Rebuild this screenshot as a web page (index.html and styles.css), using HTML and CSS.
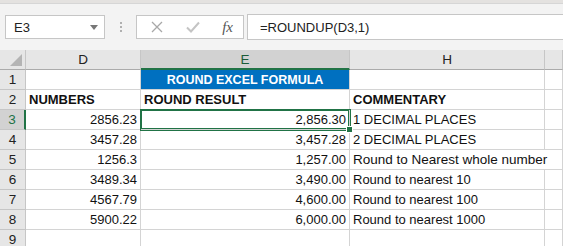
FILE: index.html
```html
<!DOCTYPE html>
<html>
<head>
    <title>ROUNDUP</title>
    <link rel="stylesheet" href="styles.css">
</head>
<body>
    <div class="ribbon"></div>
    <div class="formula-bar">
        <div class="name-box">
            <span>E3</span>
            <svg class="caret" width="8" height="5" viewBox="0 0 8 5"><path d="M0 0h8L4 5z" fill="#777"/></svg>
        </div>
        <div class="grip"><i></i><i></i><i></i></div>
        <div class="buttons">
            <svg width="12" height="12" viewBox="0 0 12 12"><path d="M1 1L11 11M11 1L1 11" stroke="#a8a8a8" stroke-width="1.3"/></svg>
            <svg width="14" height="12" viewBox="0 0 14 12"><path d="M1 6.5L5 10.5L13 1.5" stroke="#c4c4c4" stroke-width="2" fill="none"/></svg>
            <span class="fx">fx</span>
        </div>
        <div class="formula">=ROUNDUP(D3,1)</div>
    </div>

    <div class="sheet">
        <div class="corner"><svg width="12" height="12" viewBox="0 0 12 12"><path d="M12 0V12H0z" fill="#b4b4b4"/></svg></div>
        <div class="col-head">D</div>
        <div class="col-head active">E</div>
        <div class="col-head">H</div>
        <div class="col-head"></div>

        <div class="row-head">1</div>
        <div class="cell"></div>
        <div class="cell title">ROUND EXCEL FORMULA</div>
        <div class="cell"></div>
        <div class="cell"></div>

        <div class="row-head">2</div>
        <div class="cell bold">NUMBERS</div>
        <div class="cell bold">ROUND RESULT</div>
        <div class="cell bold">COMMENTARY</div>
        <div class="cell"></div>

        <div class="row-head active">3</div>
        <div class="cell num">2856.23</div>
        <div class="cell num selected">2,856.30</div>
        <div class="cell">1 DECIMAL PLACES</div>
        <div class="cell"></div>

        <div class="row-head">4</div>
        <div class="cell num">3457.28</div>
        <div class="cell num">3,457.28</div>
        <div class="cell">2 DECIMAL PLACES</div>
        <div class="cell"></div>

        <div class="row-head">5</div>
        <div class="cell num">1256.3</div>
        <div class="cell num">1,257.00</div>
        <div class="cell overflow">Round to Nearest whole number</div>
        <div class="cell"></div>

        <div class="row-head">6</div>
        <div class="cell num">3489.34</div>
        <div class="cell num">3,490.00</div>
        <div class="cell">Round to nearest 10</div>
        <div class="cell"></div>

        <div class="row-head">7</div>
        <div class="cell num">4567.79</div>
        <div class="cell num">4,600.00</div>
        <div class="cell">Round to nearest 100</div>
        <div class="cell"></div>

        <div class="row-head">8</div>
        <div class="cell num">5900.22</div>
        <div class="cell num">6,000.00</div>
        <div class="cell">Round to nearest 1000</div>
        <div class="cell"></div>

        <div class="row-head">9</div>
        <div class="cell"></div>
        <div class="cell"></div>
        <div class="cell"></div>
        <div class="cell"></div>
    </div>
</body>
</html>
```

FILE: styles.css
```css
body {
    margin: 0;
    font-family: "Liberation Sans", Arial, sans-serif;
    background-color: #f3f3f3;
    overflow: hidden;
}

.ribbon {
    height: 3px;
    background-color: #e4e2e0;
    border-bottom: 1px solid #d6d6d6;
}

.formula-bar {
    display: flex;
    align-items: center;
    height: 26px;
    margin-top: 10px;
    padding-left: 5px;
}

.name-box,
.buttons,
.formula {
    height: 24px;
    background-color: #fff;
    border: 1px solid #c6c6c6;
    display: flex;
    align-items: center;
    font-size: 13px;
    color: #222;
}

.name-box {
    width: 100px;
    justify-content: space-between;
    padding: 0 6px 0 8px;
    box-sizing: border-box;
}

.grip {
    width: 31px;
    display: flex;
    flex-direction: column;
    align-items: center;
    gap: 2px;
}

.grip i {
    width: 2px;
    height: 2px;
    background-color: #b0b0b0;
}

.buttons {
    width: 108px;
    justify-content: space-between;
    padding: 0 10px 0 14px;
    box-sizing: border-box;
}

.fx {
    font-family: "Liberation Serif", serif;
    font-style: italic;
    font-size: 15px;
    color: #555;
}

.formula {
    flex: 1;
    margin-left: 3px;
    padding-left: 12px;
    border-right: none;
}

.sheet {
    display: grid;
    grid-template-columns: 26px 115px 209px 195px 1fr;
    grid-auto-rows: 20px;
    margin-top: 10px;
    background-color: #fff;
    font-size: 13px;
    color: #111;
}

.corner,
.col-head {
    background-color: #e6e6e6;
    border-right: 1px solid #c6c6c6;
    border-bottom: 1px solid #ababab;
}

.corner {
    display: flex;
    align-items: flex-end;
    justify-content: flex-end;
    padding: 0 3px 3px 0;
}

.col-head {
    display: flex;
    align-items: center;
    justify-content: center;
    font-size: 13.5px;
    color: #222;
}

.col-head.active {
    background-color: #d2d2d2;
    border-bottom: 2px solid #217346;
    color: #1a5c38;
}

.row-head {
    background-color: #e6e6e6;
    border-right: 1px solid #c6c6c6;
    border-bottom: 1px solid #c6c6c6;
    display: flex;
    align-items: center;
    justify-content: center;
    font-size: 13.5px;
    color: #222;
}

.row-head.active {
    background-color: #d2d2d2;
    border-right: 2px solid #217346;
    color: #217346;
}

.cell {
    border-right: 1px solid #d4d4d4;
    border-bottom: 1px solid #d4d4d4;
    display: flex;
    align-items: center;
    padding: 0 3px;
    white-space: nowrap;
}

.bold {
    font-weight: bold;
}

.num {
    justify-content: flex-end;
}

.title {
    background-color: #0070c0;
    color: #fff;
    font-weight: bold;
    font-size: 12.5px;
    justify-content: center;
}

.overflow {
    border-right: none;
    overflow: visible;
    font-size: 13.5px;
}

.selected {
    position: relative;
    box-shadow: 0 0 0 1px #217346, inset 0 0 0 1px #217346;
    z-index: 1;
}

.selected::after {
    content: "";
    position: absolute;
    right: -4px;
    bottom: -4px;
    width: 5px;
    height: 5px;
    background-color: #217346;
    border: 1px solid #fff;
}
```
